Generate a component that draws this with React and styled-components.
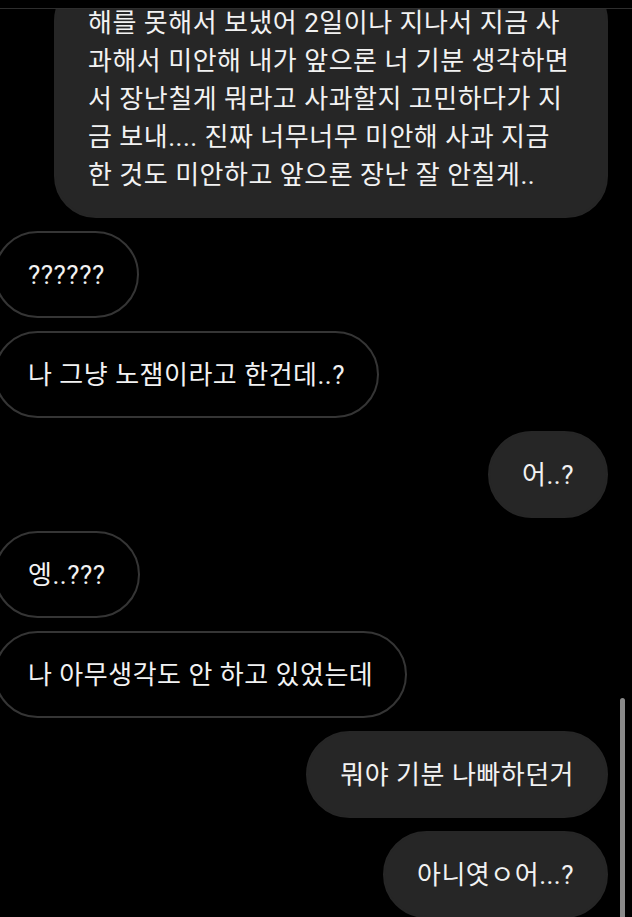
import React from "react";
import styled, { createGlobalStyle } from "styled-components";

const GlobalStyle = createGlobalStyle`
  html, body {
    margin: 0;
    padding: 0;
    background: #000;
  }
  body {
    font-family: Roboto, "Noto Sans CJK KR", sans-serif;
    -webkit-font-smoothing: antialiased;
  }
`;

const SScreen = styled.div`
  position: relative;
  width: 632px;
  height: 917px;
  background: #000;
  display: flex;
  flex-direction: column;
  overflow: hidden;
`;

const STopBar = styled.div`
  height: 8px;
  flex-shrink: 0;
  border-bottom: 1px solid #2e2e2e;
  background: #000;
  position: relative;
  z-index: 1;
`;

const SThread = styled.div`
  flex: 1;
  display: flex;
  flex-direction: column;
  gap: 13px;
  padding: 0 24px 0 0;
  overflow: hidden;
`;

const SBubble = styled.div`
  box-sizing: border-box;
  align-self: ${(p) => (p.$mine ? "flex-end" : "flex-start")};
  width: ${(p) => (p.$width ? `${p.$width}px` : "auto")};
  margin-left: ${(p) => (p.$mine ? "0" : "-6px")};
  margin-top: ${(p) => (p.$offset ? `${p.$offset}px` : "0")};
  padding: 22.5px 32px;
  border-radius: ${(p) => (p.$multi ? "42px" : "44px")};
  background: ${(p) => (p.$mine ? "#262626" : "#000")};
  border: 2px solid ${(p) => (p.$mine ? "#262626" : "#353535")};
  color: #f2f2f2;
  font-size: 26px;
  line-height: 38px;
  letter-spacing: 0.5px;
  white-space: pre-line;
  flex-shrink: 0;
`;

const SScrollThumb = styled.div`
  position: absolute;
  right: 7px;
  top: 698px;
  bottom: 0;
  width: 5px;
  border-radius: 3px 3px 0 0;
  background: #8a8a8a;
`;

const messages = [
  {
    mine: true,
    width: 554,
    offset: -30,
    multi: true,
    text:
      "해를 못해서 보냈어 2일이나 지나서 지금 사\n과해서 미안해 내가 앞으론 너 기분 생각하면\n서 장난칠게 뭐라고 사과할지 고민하다가 지\n금 보내.... 진짜 너무너무 미안해 사과 지금\n한 것도 미안하고 앞으론 장난 잘 안칠게..",
  },
  { mine: false, text: "??????" },
  { mine: false, text: "나 그냥 노잼이라고 한건데..?" },
  { mine: true, text: "어..?" },
  { mine: false, text: "엥..???" },
  { mine: false, text: "나 아무생각도 안 하고 있었는데" },
  { mine: true, text: "뭐야 기분 나빠하던거" },
  { mine: true, text: "아니엿ㅇ어...?" },
];

function App() {
  return (
    <SScreen>
      <GlobalStyle />
      <STopBar />
      <SThread>
        {messages.map((m, i) => (
          <SBubble
            key={i}
            $mine={m.mine}
            $width={m.width}
            $offset={m.offset}
            $multi={m.multi}
          >
            {m.text}
          </SBubble>
        ))}
      </SThread>
      <SScrollThumb />
    </SScreen>
  );
}

export default App;
